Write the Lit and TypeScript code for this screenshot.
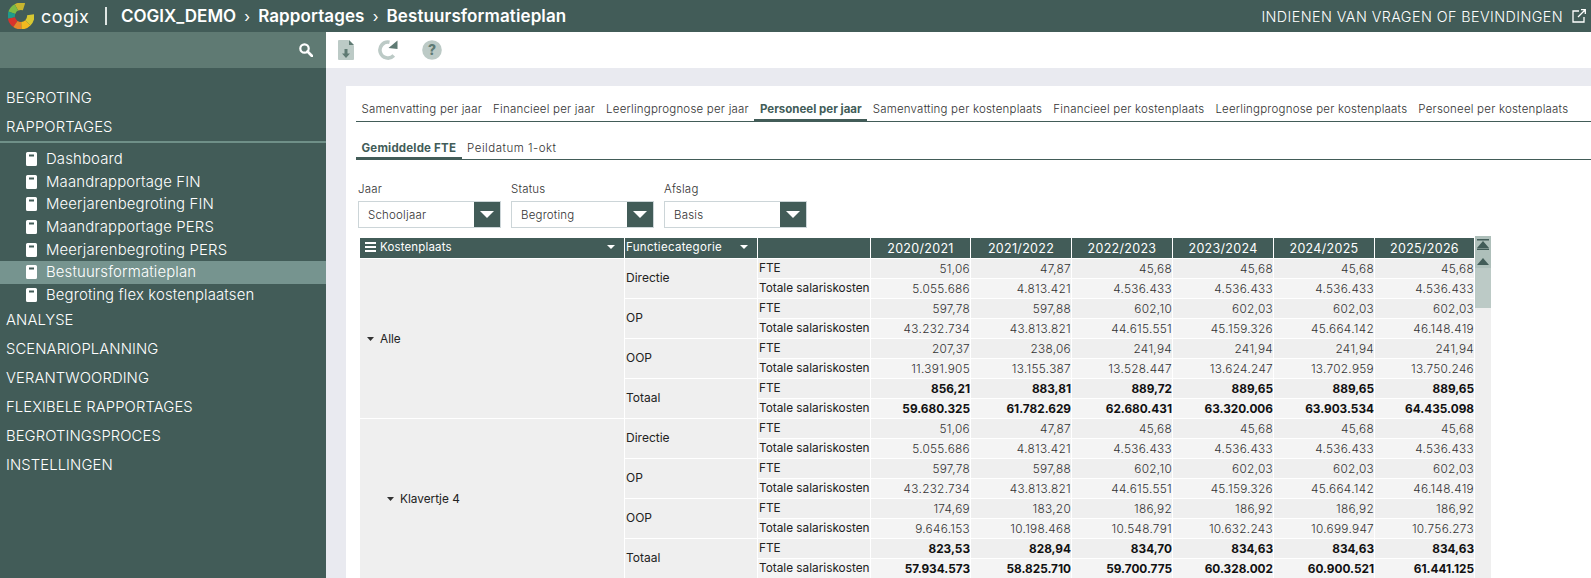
import { LitElement, html, css, svg } from "lit";
import { customElement } from "lit/decorators.js";

const YEARS = ["2020/2021", "2021/2022", "2022/2023", "2023/2024", "2024/2025", "2025/2026"];
const TABS = ["Samenvatting per jaar", "Financieel per jaar", "Leerlingprognose per jaar", "Personeel per jaar", "Samenvatting per kostenplaats", "Financieel per kostenplaats", "Leerlingprognose per kostenplaats", "Personeel per kostenplaats"];
const SUB = ["Dashboard", "Maandrapportage FIN", "Meerjarenbegroting FIN", "Maandrapportage PERS", "Meerjarenbegroting PERS", "Bestuursformatieplan", "Begroting flex kostenplaatsen"];
const NAV_BOTTOM = ["ANALYSE", "SCENARIOPLANNING", "VERANTWOORDING", "FLEXIBELE RAPPORTAGES", "BEGROTINGSPROCES", "INSTELLINGEN"];

const DIRECTIE = { name: "Directie", fte: ["51,06", "47,87", "45,68", "45,68", "45,68", "45,68"], sal: ["5.055.686", "4.813.421", "4.536.433", "4.536.433", "4.536.433", "4.536.433"] };
const OP = { name: "OP", fte: ["597,78", "597,88", "602,10", "602,03", "602,03", "602,03"], sal: ["43.232.734", "43.813.821", "44.615.551", "45.159.326", "45.664.142", "46.148.419"] };

const GROUPS = [
  {
    name: "Alle", cls: "lvl0", cats: [
      DIRECTIE, OP,
      { name: "OOP", fte: ["207,37", "238,06", "241,94", "241,94", "241,94", "241,94"], sal: ["11.391.905", "13.155.387", "13.528.447", "13.624.247", "13.702.959", "13.750.246"] },
      { name: "Totaal", total: true, fte: ["856,21", "883,81", "889,72", "889,65", "889,65", "889,65"], sal: ["59.680.325", "61.782.629", "62.680.431", "63.320.006", "63.903.534", "64.435.098"] },
    ],
  },
  {
    name: "Klavertje 4", cls: "lvl1", cats: [
      DIRECTIE, OP,
      { name: "OOP", fte: ["174,69", "183,20", "186,92", "186,92", "186,92", "186,92"], sal: ["9.646.153", "10.198.468", "10.548.791", "10.632.243", "10.699.947", "10.756.273"] },
      { name: "Totaal", total: true, fte: ["823,53", "828,94", "834,70", "834,63", "834,63", "834,63"], sal: ["57.934.573", "58.825.710", "59.700.775", "60.328.002", "60.900.521", "61.441.125"] },
    ],
  },
];

const bookIcon = html`<svg class="book" viewBox="0 0 11 14" width="11" height="14"><path fill="#fff" d="M1.5 0h8A1.5 1.5 0 0 1 11 1.5v11A1.5 1.5 0 0 1 9.500 14h-8A1.500 1.500 0 0 1 0 12.500v-11A1.500 1.500 0 0 1 1.500 0z"/><rect x="3" y="2.500" width="5" height="2" fill="#425c58"/></svg>`;

const arc = (r: number, a0: number, a1: number, color: string) => {
  const p = (a: number) => [16 + r * Math.cos((a * Math.PI) / 180), 16 + r * Math.sin((a * Math.PI) / 180)];
  const [x0, y0] = p(a0);
  const [x1, y1] = p(a1);
  return svg`<path d="M${x0} ${y0}A${r} ${r} 0 0 1 ${x1} ${y1}" stroke="${color}" stroke-width="9" fill="none"/>`;
};

@customElement("app-root")
export class AppRoot extends LitElement {
  static styles = css`
    :host { display: block; width: 1591px; height: 578px; overflow: hidden; font-family: Inter, "Noto Sans", sans-serif; background: #fff; color: #333; }
    * { box-sizing: border-box; }
    .top { height: 32px; background: #425c58; color: #fff; display: flex; align-items: center; padding-left: 8px; }
    .logo { width: 26px; height: 26px; flex: none; }
    .brand { font-size: 18px; font-weight: 400; margin-left: 7px; letter-spacing: 0.4px; width: 48px; }
    .sep { width: 2px; height: 18px; background: #dfe6e4; margin-left: 16px; margin-right: 14px; }
    .crumb { font-size: 17px; font-weight: 600; letter-spacing: 0.1px; white-space: nowrap; }
    .crumb.first { letter-spacing: 0; }
    .chev { width: 22px; text-align: center; font-size: 15px; font-weight: 400; }
    .ask { margin-left: auto; display: flex; align-items: center; font-size: 14.300px; font-weight: 300; letter-spacing: 0.44px; padding-right: 5px; white-space: nowrap; }
    .ask svg { margin-left: 9px; }
    .body { display: flex; height: 546px; }
    .side { width: 326px; flex: none; background: #425c58; color: #fff; }
    .search { height: 36px; background: #5f7a73; display: flex; align-items: center; justify-content: flex-end; padding-right: 13px; }
    .nav { padding-top: 15px; }
    .item { height: 29px; display: flex; align-items: center; padding-left: 6px; font-size: 14.800px; font-weight: 300; letter-spacing: 0.1px; }
    .rule { height: 2px; background: #6f9088; }
    .subs { padding-top: 4.700px; height: 162.400px; }
    .sub { height: 22.670px; display: flex; align-items: center; padding-left: 26px; font-size: 14.900px; font-weight: 300; letter-spacing: 0.15px; }
    .sub.on { background: #76948f; }
    .book { margin-right: 9px; flex: none; }
    .main { flex: 1; min-width: 0; display: flex; flex-direction: column; }
    .tools { height: 36px; flex: none; display: flex; align-items: center; background: #fff; padding-left: 12px; }
    .tools .i1 { margin-right: 24px; }
    .tools .i2 { margin-right: 24px; }
    .content { flex: 1; background: #e9eaf0; padding: 18px 0 0 20px; min-height: 0; }
    .card { background: #fff; height: 100%; padding: 12px 0 0 10px; overflow: hidden; }
    .tabs { display: flex; height: 24px; border-bottom: 1px solid #425c58; }
    .tab { padding: 0 5.500px; font-size: 11.500px; font-weight: 300; letter-spacing: 0.21px; line-height: 22px; white-space: nowrap; color: #333; }
    .tab.on { font-weight: 700; color: #425c58; border-bottom: 3px solid #425c58; height: 24px; letter-spacing: 0; }
    .subtabs { margin-top: 13px; height: 25px; }
    .subtabs .tab { line-height: 26px; height: 25px; letter-spacing: 0.5px; }
    .subtabs .tab.on { letter-spacing: 0.2px; }
    .filters { display: flex; gap: 10px; margin: 22px 0 0 2px; }
    .filter label { display: block; height: 19px; font-size: 11.500px; font-weight: 300; line-height: 14px; letter-spacing: 0.2px; }
    .select { width: 143px; height: 27px; border: 1px solid #ccd5d8; display: flex; align-items: center; justify-content: space-between; font-size: 11.500px; font-weight: 300; letter-spacing: 0.2px; padding-left: 9px; }
    .btn { width: 26px; height: 25px; background: #425c58; display: flex; align-items: center; justify-content: center; }
    .tablewrap { display: flex; margin: 8px 0 0 4px; }
    table { table-layout: fixed; border-collapse: separate; border-spacing: 0; width: 1115px; margin-top: 2px; flex: none; }
    .c1 { width: 265px; } .c2 { width: 133px; } .c3 { width: 113px; } .ya { width: 101px; } .yb { width: 100px; }
    th, td { padding: 0; border-right: 1px solid #fff; border-bottom: 1px solid #fff; overflow: hidden; white-space: nowrap; }
    th { height: 21px; background: #425c58; color: #fff; font-size: 11.500px; font-weight: 400; text-align: left; letter-spacing: 0.15px; }
    th.year { text-align: center; font-size: 12.500px; font-weight: 400; letter-spacing: 0.3px; }
    th .in { display: flex; align-items: center; padding: 0 1px 2px 1px; }
    th .in.k { padding-left: 5px; gap: 4px; }
    th .in.f { letter-spacing: 0.3px; }
    th .car { margin-left: auto; margin-right: 8px; }
    td { height: 20px; background: #efefef; font-size: 12px; color: #222; }
    tr.alt td.n, tr.alt td.m { background: #f4f4f4; }
    td.g { background: #efefef; font-weight: 400; font-size: 11.800px; }
    td.g .in { display: flex; align-items: center; gap: 6px; }
    td.lvl0 .in { padding-left: 7px; }
    td.lvl1 .in { padding-left: 27px; }
    td.c { padding: 0 0 2px 1px; }
    td.m { padding: 0 0 2px 1px; font-size: 11.800px; }
    td.n { text-align: right; font-size: 11.800px; font-weight: 300; letter-spacing: 0.3px; color: #333; padding-right: 0; }
    td.n.b { font-weight: 700; color: #111; letter-spacing: 0; }
    .scroll { width: 16px; height: 342px; background: #efefef; flex: none; }
    .thumb { height: 72px; background: #bccac6; }
    .arrows { height: 32px; background: #aebfba; display: flex; flex-direction: column; align-items: center; padding-top: 3px; gap: 8px; }
  `;

  private row(group: any, cat: any, ci: number, measure: string, vals: string[], first: boolean, alt: boolean) {
    return html`<tr class=${alt ? "alt" : ""}>
      ${first && ci === 0 ? html`<td class="g ${group.cls}" rowspan="8"><div class="in"><svg width="7" height="4" viewBox="0 0 7 4"><path d="M0 0h7L3.500 4z" fill="#333"/></svg>${group.name}</div></td>` : ""}
      ${first ? html`<td class="c" rowspan="2">${cat.name}</td>` : ""}
      <td class="m">${measure}</td>
      ${vals.map((v) => html`<td class="n ${cat.total ? "b" : ""}">${v}</td>`)}
    </tr>`;
  }

  render() {
    const caret = html`<svg class="car" width="8" height="4" viewBox="0 0 8 4"><path d="M0 0h8L4 4z" fill="#fff"/></svg>`;
    const selArrow = html`<div class="btn"><svg width="14" height="7" viewBox="0 0 14 7"><path d="M0 0h14L7 7z" fill="#fff"/></svg></div>`;
    return html`
      <div class="top">
        <svg class="logo" viewBox="0 0 32 32">
          ${arc(12, -118, -72, "#c7b52f")}
          ${arc(12, -160, -118, "#7dbb45")}
          ${arc(12, 168, 200, "#1f9b8b")}
          ${arc(12, 125, 168, "#d9322c")}
          ${arc(12, 88, 125, "#e8842a")}
          ${arc(12, 45, 88, "#f2b91f")}
          ${arc(12, -8, 45, "#d7c832")}
        </svg>
        <span class="brand">cogix</span>
        <span class="sep"></span>
        <span class="crumb first">COGIX_DEMO</span><span class="chev">›</span>
        <span class="crumb">Rapportages</span><span class="chev">›</span>
        <span class="crumb">Bestuursformatieplan</span>
        <div class="ask">INDIENEN VAN VRAGEN OF BEVINDINGEN
          <svg width="14" height="14" viewBox="0 0 14 14" fill="none" stroke="#fff" stroke-width="1.300"><path d="M7 2H1v11h11V8M6 8l7-7M9 .700h4.300V5"/></svg>
        </div>
      </div>
      <div class="body">
        <aside class="side">
          <div class="search"><svg width="14" height="14" viewBox="0 0 14 14"><circle cx="5.500" cy="5.500" r="4.200" fill="none" stroke="#fff" stroke-width="2.200"/><path d="M8.500 8.500L13 13" stroke="#fff" stroke-width="2.600" stroke-linecap="round"/></svg></div>
          <nav class="nav">
            <div class="item">BEGROTING</div>
            <div class="item">RAPPORTAGES</div>
            <div class="rule"></div>
            <div class="subs">
              ${SUB.map((s) => html`<div class="sub ${s === "Bestuursformatieplan" ? "on" : ""}">${bookIcon}${s}</div>`)}
            </div>
            ${NAV_BOTTOM.map((s) => html`<div class="item">${s}</div>`)}
          </nav>
        </aside>
        <div class="main">
          <div class="tools">
            <svg class="i1" width="16" height="20" viewBox="0 0 16 20"><path d="M1 0h9.500L16 5.500V19a1 1 0 0 1-1 1H1a1 1 0 0 1-1-1V1a1 1 0 0 1 1-1z" fill="#bccac6"/><path d="M11 0l5 5h-5z" fill="#5f7a73"/><path d="M6.500 9h3v4.500H12L8 18l-4-4.500h2.500z" fill="#5f7a73"/></svg>
            <svg class="i2" width="20" height="20" viewBox="0 0 20 20"><path d="M15.800 15.500A8 8 0 1 1 11.500 2.200" fill="none" stroke="#bccac6" stroke-width="3.600"/><path d="M19.500 .500v8.500l-9-1z" fill="#5f7a73"/></svg>
            <svg width="20" height="20" viewBox="0 0 20 20"><circle cx="10" cy="10" r="9.800" fill="#bccac6"/><text x="10" y="15" text-anchor="middle" font-size="14" font-weight="800" font-family="Inter, sans-serif" fill="#5f7a73">?</text></svg>
          </div>
          <div class="content">
            <div class="card">
              <div class="tabs">
                ${TABS.map((t) => html`<div class="tab ${t === "Personeel per jaar" ? "on" : ""}">${t}</div>`)}
              </div>
              <div class="tabs subtabs">
                <div class="tab on">Gemiddelde FTE</div>
                <div class="tab">Peildatum 1-okt</div>
              </div>
              <div class="filters">
                <div class="filter"><label>Jaar</label><div class="select">Schooljaar${selArrow}</div></div>
                <div class="filter"><label>Status</label><div class="select">Begroting${selArrow}</div></div>
                <div class="filter"><label>Afslag</label><div class="select">Basis${selArrow}</div></div>
              </div>
              <div class="tablewrap">
                <table>
                  <colgroup><col class="c1"/><col class="c2"/><col class="c3"/>${YEARS.map((_, i) => html`<col class=${i === 0 || i === 5 ? "yb" : "ya"}/>`)}</colgroup>
                  <thead><tr>
                    <th><div class="in k"><svg width="11" height="10" viewBox="0 0 11 10"><path d="M0 0h11v2H0zM0 4h11v2H0zM0 8h11v2H0z" fill="#fff"/></svg>Kostenplaats${caret}</div></th>
                    <th><div class="in f">Functiecategorie${caret}</div></th>
                    <th></th>
                    ${YEARS.map((y) => html`<th class="year">${y}</th>`)}
                  </tr></thead>
                  <tbody>
                    ${GROUPS.map((g) => g.cats.map((c, ci) => html`
                      ${this.row(g, c, ci, "FTE", c.fte, true, false)}
                      ${this.row(g, c, ci, "Totale salariskosten", c.sal, false, true)}
                    `))}
                  </tbody>
                </table>
                <div class="scroll"><div class="thumb"><div class="arrows">
                  <svg width="12" height="11" viewBox="0 0 12 11"><path d="M0 0h12v1.500H0zM6 2l6 7H0zM0 9.500h12V11H0z" fill="#425c58"/></svg>
                  <svg width="12" height="7" viewBox="0 0 12 7"><path d="M6 0l6 7H0z" fill="#425c58"/></svg>
                </div></div></div>
              </div>
            </div>
          </div>
        </div>
      </div>
    `;
  }
}
